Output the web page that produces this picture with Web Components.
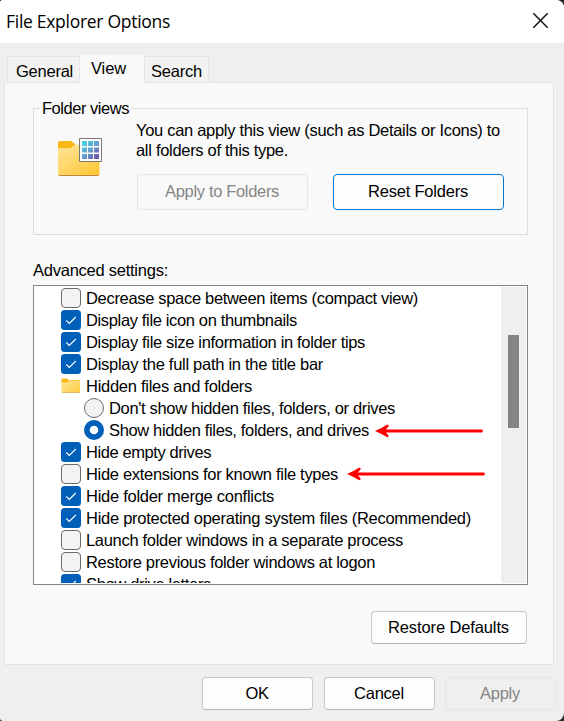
<!DOCTYPE html>
<html lang="en"><head><meta charset="utf-8"><title>File Explorer Options</title>
<style>html,body{margin:0;width:564px;height:721px;overflow:hidden;background:#26262a}body{font:16.5px/20px "Liberation Sans",Arial,sans-serif;color:#000}</style></head>
<body><options-dialog></options-dialog>
<script>
const define=(name,html,init)=>customElements.define(name,class extends HTMLElement{
  connectedCallback(){
    if(this.shadowRoot)return;
    const t=document.createElement('template');t.innerHTML=html;
    this.attachShadow({mode:'open'}).append(t.content.cloneNode(true));
    if(init)init(this,this.shadowRoot);
  }
});
// Text set to an exact line width by distributing the spacing between letters
define('fit-text',`<style>:host{display:inline-block;white-space:pre}span{display:inline-block}</style><span><slot></slot></span>`,(el,root)=>{
  const s=root.querySelector('span'),w=+el.getAttribute('w');
  if(w)s.style.letterSpacing=(w-s.getBoundingClientRect().width)/el.textContent.length+'px';
});
define('push-button',`<style>
:host{box-sizing:border-box;display:flex;align-items:center;justify-content:center;padding:0 1px 2px 0;border:1px solid #c8c8c8;border-bottom-color:#b4b4b4;border-radius:4px;background:#fdfdfd}
:host([focus]){border-color:#0078d4}
:host([disabled]){border-color:#e5e5e5;background:transparent;color:#858585}
</style><slot></slot>`);
define('title-bar',`<style>:host{display:flex;height:43px;background:#fff;justify-content:space-between;box-sizing:border-box;padding:10px 15px 0 6px;font:17.5px/22px "Open Sans","Noto Sans",sans-serif}svg{margin-top:2px}</style><slot></slot>
<svg width="17" height="17"><path d="M1.3 1.3 15.7 15.7M15.7 1.3 1.3 15.7" stroke="#111" stroke-width="1.5" fill="none"/></svg>`);
define('tab-item',`<style>
:host{box-sizing:border-box;display:block;height:26px;padding:4px 0 0 8px;border:1px solid #e5e5e5;border-bottom:0;background:#f2f2f2}
:host([active]){height:30px;padding:4px 0 0 11px;background:#f9f9f9;position:relative;z-index:1;margin-bottom:-1px}
</style><slot></slot>`);
define('group-box',`<style>:host{box-sizing:border-box;display:block;border:1px solid #dcdcdc}
.cap{display:block;width:max-content;margin:-11px 0 0 6px;padding:0 2px;background:#f9f9f9;height:20px}</style><span class="cap"><slot name="caption"></slot></span><slot></slot>`);
define('large-folder-icon',`<style>:host,svg{display:block}</style><svg width="47" height="42" viewBox="57 136 47 42">
<defs><linearGradient id="f" x2="1" y2="1"><stop stop-color="#ffe69c"/><stop offset="1" stop-color="#fec52e"/></linearGradient>
<linearGradient id="g" x1="82" y1="141" x2="99" y2="159" gradientUnits="userSpaceOnUse"><stop stop-color="#3de0e4"/><stop offset=".5" stop-color="#659fcf"/><stop offset="1" stop-color="#7344a5"/></linearGradient></defs>
<path d="M58 143q0-2 2-2h10q1.500 0 2.500 1l3.500 3h22q2 0 2 2v10H58z" fill="#f8b713"/>
<path d="M58 150q0-2 2-2h9q2 0 3.500-1.500t3-1.500H97.500q2 0 2 2v26q0 2.500-2 2.500H60q-2 0-2-2.500z" fill="url(#f)"/>
<path d="M58.500 174.500q.5 1 1.500 1h37.500q1.300 0 1.800-1" stroke="#b78b3d" fill="none"/>
<path d="M79.500 138.500h22v23h-22z" fill="#fff" stroke="#777"/>
<path d="M82 141h5v5h-5zM88 141h5v5h-5zM94 141h5v5h-5zM82 147.500h5v5h-5zM88 147.500h5v5h-5zM94 147.500h5v5h-5zM82 154h5v5h-5zM88 154h5v5h-5zM94 154h5v5h-5z" fill="url(#g)"/></svg>`);
const rowIcons={
 off:'<svg width="20" height="20"><rect x=".5" y=".5" width="19" height="19" rx="3.500" fill="#f3f3f3" stroke="#6b6b6b"/></svg>',
 on:'<svg width="20" height="20"><rect width="20" height="20" rx="3.500" fill="#005fb8"/><path d="m5.300 10.500 3 3 6.500-6.500" fill="none" stroke="#fff" stroke-width="1.100"/></svg>',
 radio:'<svg width="20" height="20"><circle cx="10" cy="10" r="9.500" fill="#f3f3f3" stroke="#6b6b6b"/></svg>',
 selected:'<svg width="20" height="20"><circle cx="10" cy="10" r="10" fill="#005fb8"/><circle cx="10" cy="10" r="4.300" fill="#fff"/></svg>',
 folder:'<svg width="20" height="20" viewBox="0 -.5 20 20"><defs><linearGradient id="f" x2="1" y2="1"><stop stop-color="#ffe69c"/><stop offset="1" stop-color="#fecb40"/></linearGradient></defs><path d="M.5 3q0-1 1-1h4.500L7.500 3.500H18q1 0 1 1V9H.5z" fill="#f8b713"/><path d="M.5 6h6L8.500 4H18q1 0 1 1v10q0 1-1 1H1.500q-1 0-1-1z" fill="url(#f)"/><path d="M1 16h17.500" stroke="#dca944" stroke-width=".8"/></svg>'};
define('setting-row',`<style>:host{display:flex;height:22px;padding-left:26px;gap:5px;align-items:flex-start}:host([nested]){padding-left:49px}
i{display:block;width:20px;height:20px;margin-top:1px}svg{display:block}slot{display:block;line-height:22px}</style><i></i><slot></slot>`,(el,root)=>{root.querySelector('i').innerHTML=rowIcons[el.getAttribute('state')]});
define('scroll-bar',`<style>:host{display:block;width:25px;flex:none;background:#efefef}i{display:block;width:11px;height:93px;margin:48px 0 0 7px;background:#858585}</style><i></i>`);
define('settings-list',`<style>:host{box-sizing:border-box;display:flex;border:1px solid #828790;padding:1px;background:#fff;overflow:hidden}
div{flex:1;overflow:hidden;min-width:0}</style><div><slot></slot></div><scroll-bar></scroll-bar>`);
define('red-arrow',`<style>:host{position:absolute;display:block}svg{display:block}</style><svg height="14"><path fill="none" stroke="red" stroke-width="2.800" stroke-linecap="round"/><path d="M0 7 Q7 4 12.300 .5 L14 1.800 L11 5.500 V8.500 L14 12 L12.300 13.300 Q7 10 0 7z" fill="red"/></svg>`,(el,root)=>{
 const n=+el.getAttribute('length');root.querySelector('svg').setAttribute('width',n);root.querySelector('path').setAttribute('d',`M6 7H${n-1.5}`);
});
define('options-dialog',`<style>
:host{display:block;position:relative;width:564px;height:721px;border-radius:3px 8px 8px 3px;overflow:hidden;background:#efefef}
nav{display:flex;align-items:flex-end;height:29px;padding:10px 0 0 7px}
main{box-sizing:border-box;width:550px;height:583px;margin-left:4px;border:1px solid #e3e3e3;background:#f9f9f9;padding:25px 25px 0 28px;box-shadow:2px 0 #f3f3f3}
group-box{width:495px;height:127px}
.view{display:grid;grid-template-columns:102px 1fr;padding-top:2px}
large-folder-icon{margin:16px 0 0 23px}
.copy{display:grid}
.buttons{display:flex;gap:25px;margin:14px 0 0 1px}.buttons push-button{width:171px;height:36px}
.label{height:20px;margin:25px 0 5px}
settings-list{width:495px;height:300px}
.restore{width:156px;height:33px;margin:26px 0 0 338px}
footer{display:flex;justify-content:flex-end;gap:11px;padding:12px 8px 0 0}footer push-button{width:111px;height:33px}
footer push-button:last-child{margin-left:-1px}
</style>
<title-bar><fit-text w="164">File Explorer Options</fit-text></title-bar>
<nav><tab-item style="width:73px"><fit-text w="57">General</fit-text></tab-item><tab-item active style="width:66px;margin-left:-1px"><fit-text w="35">View</fit-text></tab-item><tab-item style="width:65px;margin-left:-1px;padding-left:6px"><fit-text w="51">Search</fit-text></tab-item></nav>
<main>
<group-box><fit-text slot="caption" w="87">Folder views</fit-text>
<div class="view"><large-folder-icon></large-folder-icon><div><div class="copy"><fit-text w="364">You can apply this view (such as Details or Icons) to</fit-text><fit-text w="152">all folders of this type.</fit-text></div>
<div class="buttons"><push-button disabled><fit-text w="114">Apply to Folders</fit-text></push-button><push-button focus><fit-text w="100">Reset Folders</fit-text></push-button></div></div></div></group-box>
<div class="label"><fit-text w="135">Advanced settings:</fit-text></div>
<settings-list>
<setting-row state="off"><fit-text w="332">Decrease space between items (compact view)</fit-text></setting-row>
<setting-row state="on"><fit-text w="211">Display file icon on thumbnails</fit-text></setting-row>
<setting-row state="on"><fit-text w="279">Display file size information in folder tips</fit-text></setting-row>
<setting-row state="on"><fit-text w="237">Display the full path in the title bar</fit-text></setting-row>
<setting-row state="folder"><fit-text w="166">Hidden files and folders</fit-text></setting-row>
<setting-row nested state="radio"><fit-text w="286">Don't show hidden files, folders, or drives</fit-text></setting-row>
<setting-row nested state="selected"><fit-text w="260">Show hidden files, folders, and drives</fit-text></setting-row>
<setting-row state="on"><fit-text w="125">Hide empty drives</fit-text></setting-row>
<setting-row state="off"><fit-text w="252">Hide extensions for known file types</fit-text></setting-row>
<setting-row state="on"><fit-text w="188">Hide folder merge conflicts</fit-text></setting-row>
<setting-row state="on"><fit-text w="385">Hide protected operating system files (Recommended)</fit-text></setting-row>
<setting-row state="off"><fit-text w="317">Launch folder windows in a separate process</fit-text></setting-row>
<setting-row state="off"><fit-text w="289">Restore previous folder windows at logon</fit-text></setting-row>
<setting-row state="on"><fit-text w="125">Show drive letters</fit-text></setting-row>
</settings-list>
<push-button class="restore"><fit-text w="121">Restore Defaults</fit-text></push-button>
</main>
<footer><push-button><fit-text w="23">OK</fit-text></push-button><push-button><fit-text w="50">Cancel</fit-text></push-button><push-button disabled><fit-text w="40">Apply</fit-text></push-button></footer>
<red-arrow length="108" style="left:375px;top:423.500px"></red-arrow><red-arrow length="138" style="left:347px;top:466.500px"></red-arrow>`);
</script></body></html>
